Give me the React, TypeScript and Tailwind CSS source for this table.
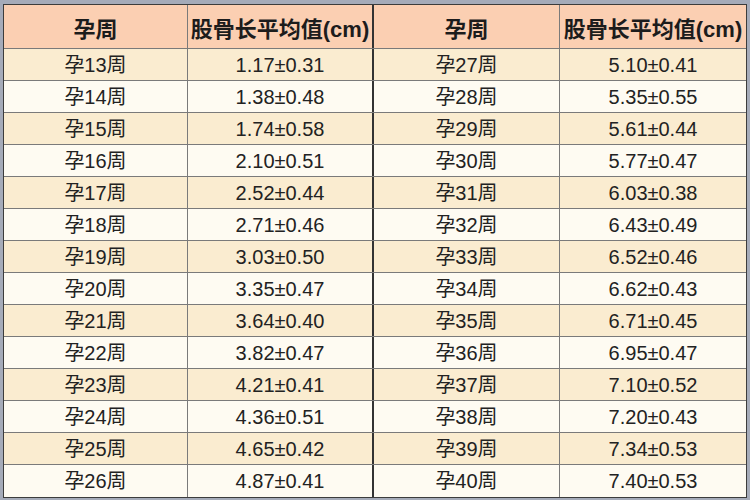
const left = [
  ['孕13周', '1.17±0.31'],
  ['孕14周', '1.38±0.48'],
  ['孕15周', '1.74±0.58'],
  ['孕16周', '2.10±0.51'],
  ['孕17周', '2.52±0.44'],
  ['孕18周', '2.71±0.46'],
  ['孕19周', '3.03±0.50'],
  ['孕20周', '3.35±0.47'],
  ['孕21周', '3.64±0.40'],
  ['孕22周', '3.82±0.47'],
  ['孕23周', '4.21±0.41'],
  ['孕24周', '4.36±0.51'],
  ['孕25周', '4.65±0.42'],
  ['孕26周', '4.87±0.41'],
];

const right = [
  ['孕27周', '5.10±0.41'],
  ['孕28周', '5.35±0.55'],
  ['孕29周', '5.61±0.44'],
  ['孕30周', '5.77±0.47'],
  ['孕31周', '6.03±0.38'],
  ['孕32周', '6.43±0.49'],
  ['孕33周', '6.52±0.46'],
  ['孕34周', '6.62±0.43'],
  ['孕35周', '6.71±0.45'],
  ['孕36周', '6.95±0.47'],
  ['孕37周', '7.10±0.52'],
  ['孕38周', '7.20±0.43'],
  ['孕39周', '7.34±0.53'],
  ['孕40周', '7.40±0.53'],
];

const font = { fontFamily: '"Liberation Sans", "Noto Sans CJK SC", sans-serif' };

export default function App() {
  return (
    <div className="w-[750px] h-[500px] bg-[#a5abb9] pl-[3px] pt-[4px] pr-[3px] pb-[3px]" style={font}>
      <div className="border border-[#3c3c3c] bg-[#fefbf2]">
        <div className="grid grid-cols-[184px_186px_186px_1fr] h-[44px] bg-[#fbcfb2] border-b border-[#7a7a7a] text-[22px] font-bold text-[#1c1c1c]">
          <div className="flex items-center justify-center pt-[5px] border-r border-[#7a7a7a]">孕周</div>
          <div className="flex items-center justify-center pt-[5px] border-r-2 border-[#333]">股骨长平均值(cm)</div>
          <div className="flex items-center justify-center pt-[5px] border-r border-[#7a7a7a]">孕周</div>
          <div className="flex items-center justify-center pt-[5px]">股骨长平均值(cm)</div>
        </div>
        {left.map((row, i) => {
          const r = right[i];
          const bg = i % 2 === 0 ? 'bg-[#faecd0]' : 'bg-[#fefbf2]';
          const last = i === left.length - 1;
          return (
            <div
              key={row[0]}
              className={`grid grid-cols-[184px_186px_186px_1fr] h-[32px] text-[20px] text-[#222] ${bg} ${last ? '' : 'border-b border-[#7a7a7a]'}`}
            >
              <div className="flex items-center justify-center border-r border-[#7a7a7a]">{row[0]}</div>
              <div className="flex items-center justify-center border-r-2 border-[#333]">{row[1]}</div>
              <div className="flex items-center justify-center border-r border-[#7a7a7a]">{r[0]}</div>
              <div className="flex items-center justify-center">{r[1]}</div>
            </div>
          );
        })}
      </div>
    </div>
  );
}
